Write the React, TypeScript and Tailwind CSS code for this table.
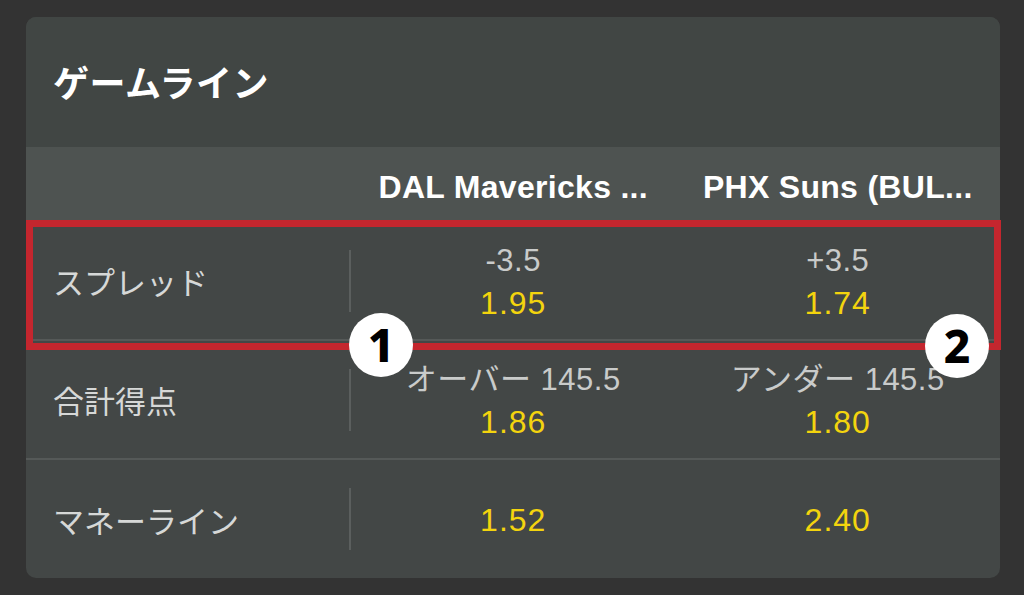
import React from "react";

const jp = '"Noto Sans CJK JP", "Noto Sans", sans-serif';
const num = '"Liberation Sans", "Noto Sans CJK JP", sans-serif';

function Odds({ top, price }: { top?: string; price: string }) {
  return (
    <div className="flex-1 flex flex-col items-center justify-center pt-[3px]">
      {top && (
        <div
          className="text-[31px] leading-[43px] text-[#c9cbca] tracking-[0.5px]"
          style={{ fontFamily: num }}
        >
          {top}
        </div>
      )}
      <div
        className="text-[32px] leading-[43px] text-[#f3d40e] tracking-[1px]"
        style={{ fontFamily: num }}
      >
        {price}
      </div>
    </div>
  );
}

function Row({
  label,
  a,
  b,
  last,
}: {
  label: string;
  a: { top?: string; price: string };
  b: { top?: string; price: string };
  last?: boolean;
}) {
  return (
    <div
      className={
        "flex items-center " +
        (last ? "h-[118px]" : "h-[119px] border-b-2 border-[#555958]")
      }
    >
      <div
        className="w-[323px] pl-[27px] text-[31px] text-[#d6d8d7] leading-none"
        style={{ fontFamily: jp }}
      >
        {label}
      </div>
      <div className="w-[2px] h-[62px] bg-[#5b5f5e]" />
      <div className="flex-1 flex h-full">
        <Odds top={a.top} price={a.price} />
        <Odds top={b.top} price={b.price} />
      </div>
    </div>
  );
}

function Badge({ n, className }: { n: string; className: string }) {
  return (
    <div
      className={
        "absolute w-[64px] h-[64px] rounded-full bg-white flex items-center justify-center text-black font-extrabold text-[46px] leading-none " +
        className
      }
      style={{ fontFamily: '"Noto Sans", "Open Sans", sans-serif' }}
    >
      <span className="-mt-[2px]">{n}</span>
    </div>
  );
}

export default function App() {
  return (
    <div className="w-[1024px] h-[595px] bg-[#333333] pt-[17px] pl-[26px]">
      <div className="relative w-[974px]">
        <div className="w-[974px] h-[561px] rounded-[10px] overflow-hidden bg-[#434746]">
          <div className="h-[130px] bg-[#414644] flex items-center pl-[27px] pb-[3px]">
            <div
              className="text-[36px] font-bold text-white leading-none tracking-[0.5px]"
              style={{ fontFamily: jp }}
            >
              ゲームライン
            </div>
          </div>
          <div className="h-[75px] bg-[#4e5351] flex items-center pt-[5px]">
            <div className="w-[325px]" />
            <div
              className="flex-1 text-center text-[32px] font-bold text-white tracking-[0.3px]"
              style={{ fontFamily: num }}
            >
              DAL Mavericks ...
            </div>
            <div
              className="flex-1 text-center text-[32px] font-bold text-white tracking-[0.3px]"
              style={{ fontFamily: num }}
            >
              PHX Suns (BUL...
            </div>
          </div>
          <Row
            label="スプレッド"
            a={{ top: "-3.5", price: "1.95" }}
            b={{ top: "+3.5", price: "1.74" }}
          />
          <Row
            label="合計得点"
            a={{ top: "オーバー 145.5", price: "1.86" }}
            b={{ top: "アンダー 145.5", price: "1.80" }}
          />
          <Row
            label="マネーライン"
            a={{ price: "1.52" }}
            b={{ price: "2.40" }}
            last
          />
        </div>
        <div className="absolute left-0 top-[203px] w-[975px] h-[130px] border-[7px] border-[#c4262e]" />
        <Badge n="1" className="left-[323px] top-[296px]" />
        <Badge n="2" className="left-[899px] top-[297px]" />
      </div>
    </div>
  );
}
